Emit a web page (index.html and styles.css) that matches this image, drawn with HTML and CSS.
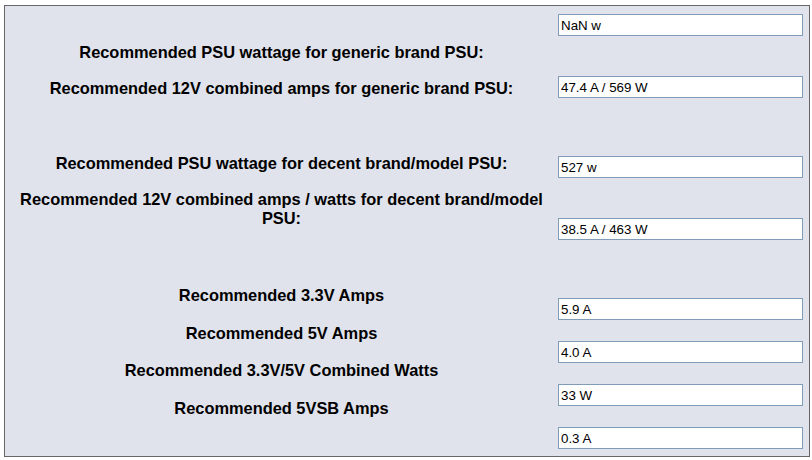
FILE: index.html
```html
<!DOCTYPE html>
<html lang="en">
<head>
  <meta charset="UTF-8" />
  <title>PSU Calculator Results</title>
  <link rel="stylesheet" href="styles.css">
</head>
<body>
  <div class="results">
    <div class="labels">
      <p class="label first">Recommended PSU wattage for generic brand PSU:</p>
      <p class="label">Recommended 12V combined amps for generic brand PSU:</p>
      <p class="label group">Recommended PSU wattage for decent brand/model PSU:</p>
      <p class="label">Recommended 12V combined amps / watts for decent brand/model PSU:</p>
      <p class="label rails">Recommended 3.3V Amps</p>
      <p class="label rail">Recommended 5V Amps</p>
      <p class="label rail">Recommended 3.3V/5V Combined Watts</p>
      <p class="label rail">Recommended 5VSB Amps</p>
    </div>
    <div class="fields">
      <input type="text" class="field" value="NaN w" readonly />
      <input type="text" class="field pair" value="47.4 A / 569 W" readonly />
      <input type="text" class="field group" value="527 w" readonly />
      <input type="text" class="field pair" value="38.5 A / 463 W" readonly />
      <input type="text" class="field group" value="5.9 A" readonly />
      <input type="text" class="field" value="4.0 A" readonly />
      <input type="text" class="field" value="33 W" readonly />
      <input type="text" class="field" value="0.3 A" readonly />
    </div>
  </div>
</body>
</html>
```

FILE: styles.css
```css
body {
  margin: 0;
  font-family: "Liberation Sans", Arial, sans-serif;
  background: #fff;
}

.results {
  display: flex;
  width: 804px;
  height: 450px;
  margin: 5px 0 0 4px;
  border: 1px solid #666;
  background: #e0e3eb;
}

.labels {
  box-sizing: border-box;
  width: 553px;
  padding: 37px 8px 0;
  text-align: center;
}

.label {
  margin: 17px 0 0;
  font-size: 16.4px;
  font-weight: bold;
  line-height: 19px;
  color: #000;
}

.label.first {
  margin-top: 0;
}

.label.group {
  margin-top: 56px;
}

.label.rails {
  margin-top: 58px;
}

.label.rail {
  margin-top: 18.5px;
}

.fields {
  display: flex;
  flex-direction: column;
  padding-top: 8px;
}

.field {
  box-sizing: border-box;
  width: 245px;
  height: 22px;
  margin: 21px 0 0;
  padding: 1px 2px;
  border: 1px solid #7f9db9;
  background: #fff;
  font-family: "Liberation Sans", Arial, sans-serif;
  font-size: 13.33px;
  color: #000;
  outline: none;
}

.field:first-child {
  margin-top: 0;
}

.field.pair {
  margin-top: 40px;
}

.field.group {
  margin-top: 58px;
}
```
